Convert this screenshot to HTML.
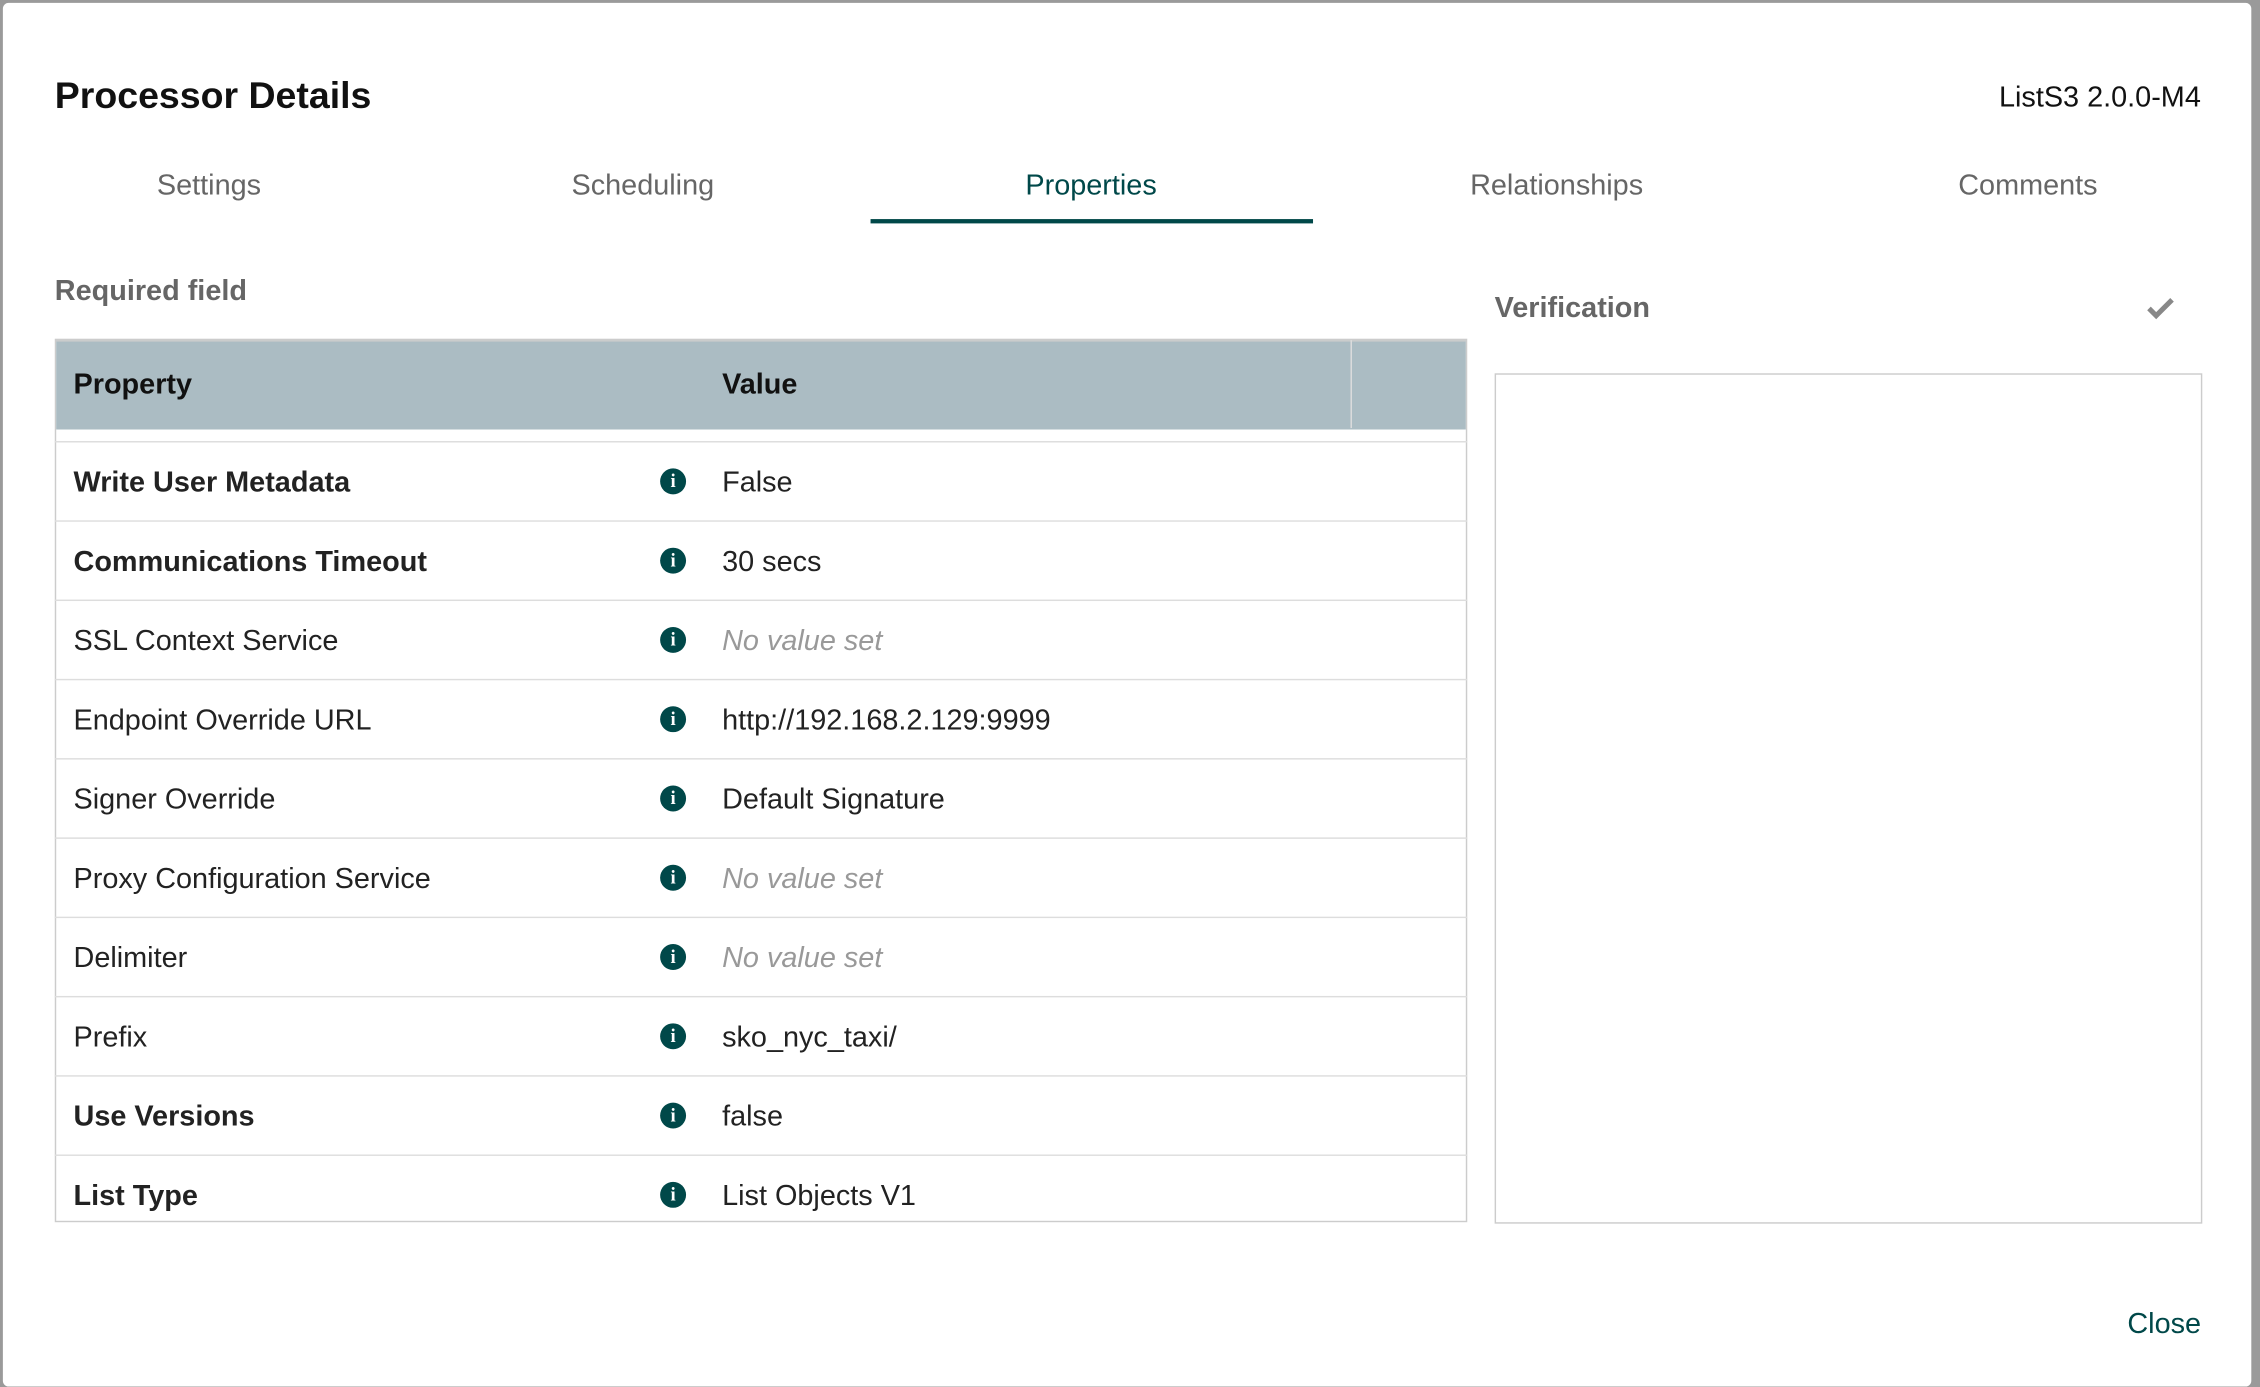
<!DOCTYPE html>
<html><head><meta charset="utf-8"><style>
html,body{margin:0;padding:0;width:2260px;height:1378px;overflow:hidden;background:#9a9a9a;}
#w{position:absolute;left:0;top:0;width:1568px;height:956px;transform:scale(1.4413);transform-origin:0 0;font-family:"Liberation Sans",sans-serif;}
#d{position:absolute;left:2px;top:2px;width:1560px;height:960px;background:#fff;border-radius:4px;}
.a{position:absolute;white-space:nowrap;}
.tab{position:absolute;top:118px;font-size:20px;color:#666;transform:translateX(-50%);}
.row{position:absolute;left:38px;width:980px;height:55px;border-top:1px solid #ddd;font-size:20px;color:#222;}
.row span{position:absolute;top:17px;}
.row .n{left:13px;}
.row .v{left:463px;}
.row .i{left:420px;top:18px;width:18px;height:18px;border-radius:50%;background:#004849;color:#fff;font:bold 13px/18px "Liberation Serif",serif;text-align:center;}
.b{font-weight:bold;}
.e{font-style:italic;color:#999 !important;}
</style></head><body><div id="w"><div id="d"></div>
<div class="a" style="left:38px;top:51px;font-size:26px;font-weight:bold;color:#111;">Processor Details</div>
<div class="a" style="right:41px;top:57px;font-size:20px;color:#111;">ListS3 2.0.0-M4</div>
<div class="tab" style="left:145px">Settings</div>
<div class="tab" style="left:446px">Scheduling</div>
<div class="tab" style="left:757px;color:#004849">Properties</div>
<div class="tab" style="left:1080px">Relationships</div>
<div class="tab" style="left:1407px">Comments</div>
<div class="a" style="left:604px;top:152px;width:307px;height:3px;background:#004849"></div>
<div class="a" style="left:38px;top:191px;font-size:20px;font-weight:bold;color:#666">Required field</div>
<div class="a" style="left:38px;top:235px;width:978px;height:611px;border:1px solid #ccc;"></div>
<div class="a" style="left:39px;top:236px;width:978px;height:61px;background:#abbcc3;border-top:1px solid #ccc"></div>
<div class="a" style="left:937px;top:236px;width:1px;height:61px;background:#ddd"></div>
<div class="a" style="left:51px;top:256px;font-size:20px;font-weight:bold;color:#111">Property</div>
<div class="a" style="left:501px;top:256px;font-size:20px;font-weight:bold;color:#111">Value</div>
<div class="row" style="top:306px"><span class="n b">Write User Metadata</span><span class="i">i</span><span class="v">False</span></div>
<div class="row" style="top:361px"><span class="n b">Communications Timeout</span><span class="i">i</span><span class="v">30 secs</span></div>
<div class="row" style="top:416px"><span class="n">SSL Context Service</span><span class="i">i</span><span class="v e">No value set</span></div>
<div class="row" style="top:471px"><span class="n">Endpoint Override URL</span><span class="i">i</span><span class="v">http://192.168.2.129:9999</span></div>
<div class="row" style="top:526px"><span class="n">Signer Override</span><span class="i">i</span><span class="v">Default Signature</span></div>
<div class="row" style="top:581px"><span class="n">Proxy Configuration Service</span><span class="i">i</span><span class="v e">No value set</span></div>
<div class="row" style="top:636px"><span class="n">Delimiter</span><span class="i">i</span><span class="v e">No value set</span></div>
<div class="row" style="top:691px"><span class="n">Prefix</span><span class="i">i</span><span class="v">sko_nyc_taxi/</span></div>
<div class="row" style="top:746px"><span class="n b">Use Versions</span><span class="i">i</span><span class="v">false</span></div>
<div class="row" style="top:801px;height:46px"><span class="n b">List Type</span><span class="i">i</span><span class="v">List Objects V1</span></div>
<div class="a" style="left:1037px;top:203px;font-size:20px;font-weight:bold;color:#666">Verification</div>
<svg class="a" style="left:1489px;top:205px" width="20" height="18" viewBox="0 0 20 18"><path d="M2 9l5 5 11-11" fill="none" stroke="#888" stroke-width="3.5"/></svg>
<div class="a" style="left:1037px;top:259px;width:489px;height:588px;border:1px solid #ccc"></div>
<div class="a" style="left:1476px;top:908px;font-size:20px;color:#004849">Close</div>
</div></body></html>
